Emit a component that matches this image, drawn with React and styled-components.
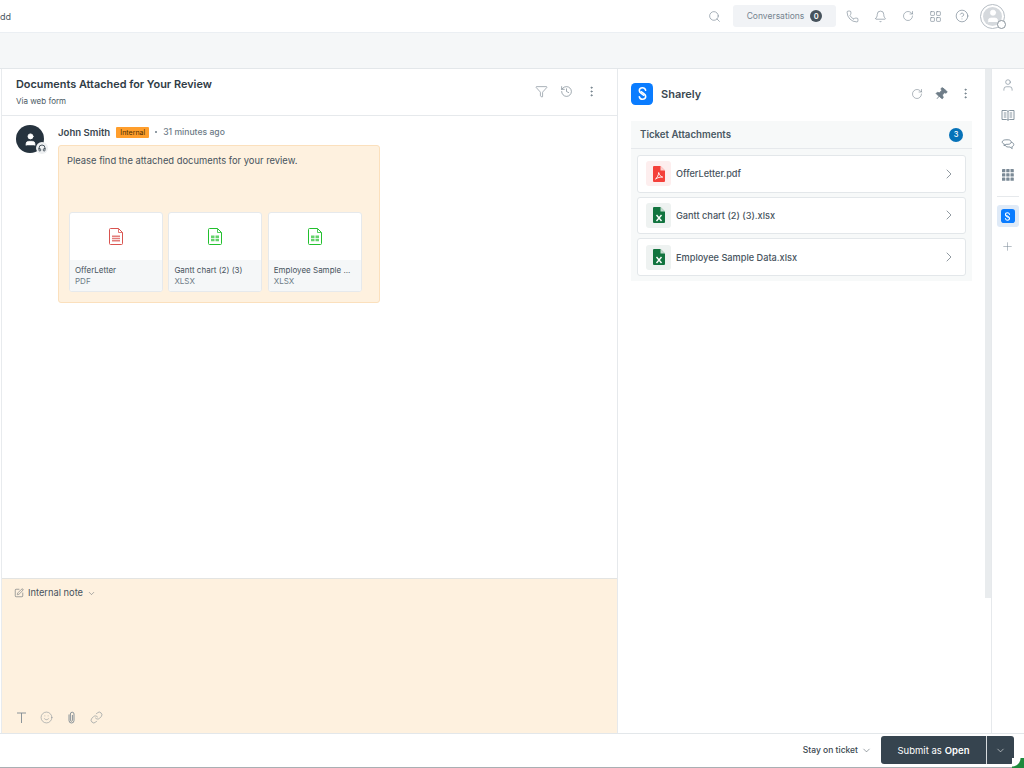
import styled, { createGlobalStyle } from "styled-components";
import { Search, Phone, Bell, RotateCw, LayoutGrid, CircleHelp, Filter, History, EllipsisVertical, Pin, ChevronRight, ChevronDown, SquarePen, Smile, Link, User, Plus, Headphones } from "lucide-react";

const GlobalStyle = createGlobalStyle`
  html, body { margin: 0; padding: 0; height: 100%; background: #fff; overflow: hidden; }
  body { font-family: Inter, "Liberation Sans", sans-serif; color: #3a4750; }
  * { box-sizing: border-box; }
`;

const Page = styled.div`
  width: 1024px;
  height: 768px;
  display: flex;
  flex-direction: column;
  position: relative;
  overflow: hidden;
`;

const TopBar = styled.header`
  height: 33px;
  flex: none;
  display: flex;
  align-items: center;
  justify-content: space-between;
  border-bottom: 1px solid #ebeff3;
  padding-right: 19px;
  font-size: 9px;
  color: #4a5863;
`;

const TopActions = styled.div`
  display: flex;
  align-items: center;
`;

const TopIcon = styled.span`
  display: flex;
  align-items: center;
  justify-content: center;
  width: 16px;
  margin-left: ${props => props.$left || 12}px;
  color: #7b8a96;
`;

const ConvButton = styled.div`
  width: 103px;
  height: 22px;
  margin-left: 11px;
  border-radius: 3px;
  background: #f1f3f6;
  display: flex;
  align-items: center;
  justify-content: center;
  gap: 6px;
  font-size: 8.5px;
  color: #75838f;
`;

const CountDot = styled.span`
  width: 12px;
  height: 12px;
  border-radius: 50%;
  background: #47535d;
  color: #fff;
  font-size: 7.5px;
  font-weight: 600;
  display: flex;
  align-items: center;
  justify-content: center;
`;

const Avatar = styled.div`
  width: 25px;
  height: 25px;
  margin-left: 10px;
  border: 1.5px solid #b6bdc4;
  border-radius: 50%;
  background: #fff;
  padding: 2px;
  position: relative;
`;

const AvatarFill = styled.div`
  width: 100%;
  height: 100%;
  border-radius: 50%;
  background: #d5d9dd;
  color: #fff;
  display: flex;
  align-items: center;
  justify-content: center;
  overflow: hidden;
`;

const StatusDot = styled.span`
  position: absolute;
  right: -2px;
  bottom: -1px;
  width: 9px;
  height: 9px;
  border-radius: 50%;
  background: #fff;
  border: 1.5px solid #8a949c;
`;

const Band = styled.div`
  height: 36px;
  flex: none;
  background: #f5f7f8;
  border-bottom: 1px solid #e3e7ea;
`;

const Main = styled.main`
  flex: 1;
  min-height: 0;
  display: flex;
  padding-left: 1px;
  background: #fff;
`;

const TicketColumn = styled.section`
  width: 617px;
  flex: none;
  display: flex;
  flex-direction: column;
  border-left: 1px solid #e8ebee;
  border-right: 1px solid #e6e9ec;
`;

const TicketHeader = styled.div`
  height: 47px;
  flex: none;
  display: flex;
  justify-content: space-between;
  padding: 8px 19px 0 14px;
  border-bottom: 1px solid #e6e9ec;
`;

const TicketTitle = styled.h1`
  margin: 0;
  font-size: 10.9px;
  line-height: 14px;
  font-weight: 600;
  color: #2f3b45;
`;

const TicketSource = styled.div`
  margin-top: 5px;
  font-size: 8px;
  line-height: 11px;
  color: #4a5863;
`;

const HeaderIcons = styled.div`
  display: flex;
  align-items: center;
  gap: 12px;
  height: 28px;
  color: #6f7d88;
`;

const Thread = styled.div`
  flex: 1;
  min-height: 0;
  display: flex;
  gap: 14px;
  padding: 9px 14px;
`;

const AuthorAvatar = styled.div`
  width: 28px;
  height: 28px;
  flex: none;
  border-radius: 50%;
  background: #26333e;
  color: #fff;
  display: flex;
  align-items: center;
  justify-content: center;
  position: relative;
`;

const AgentBadge = styled.span`
  position: absolute;
  right: -4px;
  bottom: -1px;
  width: 12px;
  height: 12px;
  border-radius: 50%;
  background: #eef0f2;
  color: #26333e;
  display: flex;
  align-items: center;
  justify-content: center;
`;

const MessageMeta = styled.div`
  height: 14px;
  display: flex;
  align-items: center;
  font-size: 9.5px;
  color: #6d7b87;
`;

const AuthorName = styled.span`
  font-size: 9.6px;
  font-weight: 600;
  color: #3a4750;
`;

const InternalTag = styled.span`
  margin-left: 6px;
  width: 33px;
  height: 11px;
  border-radius: 1px;
  background: #ff9e2c;
  color: #4a2d00;
  font-size: 7px;
  line-height: 11px;
  text-align: center;
`;

const MetaDot = styled.span`
  margin: 0 6px;
  width: 2px;
  height: 2px;
  border-radius: 50%;
  background: #6d7b87;
`;

const MetaTime = styled.span`
  font-size: 8.6px;
  font-weight: 500;
`;

const NoteCard = styled.div`
  margin-top: 6px;
  width: 322px;
  height: 158px;
  border: 1px solid #fbe0bd;
  border-radius: 3px;
  background: #fef1df;
  padding: 8px 8px 0 8px;
`;

const NoteText = styled.div`
  font-size: 9.4px;
  line-height: 13px;
  color: #47535d;
`;

const AttachmentRow = styled.div`
  display: flex;
  gap: 5.4px;
  margin: 45px 0 0 2px;
`;

const AttachmentCard = styled.div`
  width: 94px;
  height: 80px;
  border: 1px solid #e6e9ec;
  border-radius: 3px;
  background: #fff;
  overflow: hidden;
  display: flex;
  flex-direction: column;
`;

const AttachmentPreview = styled.div`
  height: 47px;
  flex: none;
  display: flex;
  align-items: center;
  justify-content: center;
`;

const AttachmentInfo = styled.div`
  flex: 1;
  background: #f5f7f8;
  padding: 5px 5px 0;
`;

const AttachmentName = styled.div`
  font-size: 8px;
  line-height: 11px;
  color: #47535d;
  white-space: nowrap;
`;

const AttachmentType = styled.div`
  font-size: 8px;
  line-height: 11px;
  color: #6d7b87;
`;

const Composer = styled.div`
  height: 155px;
  flex: none;
  background: #fef1df;
  border-top: 1px solid #e3e4e2;
  display: flex;
  flex-direction: column;
  justify-content: space-between;
  padding: 8px 12px 9px;
`;

const NoteType = styled.div`
  display: flex;
  align-items: center;
  gap: 4px;
  font-size: 9.3px;
  line-height: 12px;
  color: #47535d;
`;

const ComposerTools = styled.div`
  display: flex;
  align-items: center;
  gap: 12px;
  padding-left: 1px;
  color: #7f8a92;
`;

const AppPanel = styled.aside`
  width: 367px;
  flex: none;
  padding: 13px 13px 0 13px;
`;

const AppHeader = styled.div`
  height: 23px;
  display: flex;
  align-items: center;
`;

const AppLogo = styled.div`
  width: ${props => props.$size}px;
  height: ${props => props.$size}px;
  flex: none;
  border-radius: ${props => props.$size / 5}px;
  background: #0a7cff;
  color: #fff;
  display: flex;
  align-items: center;
  justify-content: center;
`;

const AppName = styled.div`
  margin-left: 8px;
  font-size: 11px;
  font-weight: 600;
  color: #3a4750;
`;

const AppActions = styled.div`
  margin-left: auto;
  display: flex;
  align-items: center;
  gap: 11px;
  color: #6f7d88;
`;

const TiltedPin = styled(Pin)`
  transform: rotate(40deg);
`;

const AttachmentsBox = styled.div`
  margin-top: 16px;
  height: 160px;
  width: 341px;
  background: #f7f9f9;
`;

const BoxHeader = styled.div`
  height: 28px;
  display: flex;
  align-items: center;
  justify-content: space-between;
  padding: 0 9px 0 9px;
  border-bottom: 1px solid #e6e9ec;
  font-size: 9.7px;
  font-weight: 600;
  color: #4a5863;
`;

const BoxCount = styled.span`
  width: 14px;
  height: 14px;
  border-radius: 50%;
  background: #0672b8;
  color: #fff;
  font-size: 7.5px;
  font-weight: 500;
  display: flex;
  align-items: center;
  justify-content: center;
`;

const FileList = styled.div`
  padding: 6px 6px 0;
  display: flex;
  flex-direction: column;
  gap: 4.2px;
`;

const FileRow = styled.div`
  height: 37.5px;
  display: flex;
  align-items: center;
  padding: 0 8px;
  background: #fff;
  border: 1px solid #e3e7ea;
  border-radius: 3px;
  font-size: 9.2px;
  font-weight: 500;
  color: #47535d;
`;

const FileBadge = styled.span`
  width: 25px;
  height: 25px;
  flex: none;
  margin-right: 5px;
  border-radius: 3px;
  background: ${props => props.$bg};
  display: flex;
  align-items: center;
  justify-content: center;
`;

const RowChevron = styled.span`
  margin-left: auto;
  color: #7f8a92;
  display: flex;
`;

const ScrollTrack = styled.div`
  width: 6px;
  flex: none;
  background: #fff;
`;

const ScrollThumb = styled.div`
  height: 529px;
  background: #e9ecee;
`;

const Rail = styled.nav`
  flex: 1;
  border-left: 1px solid #e6e9ec;
  display: flex;
  flex-direction: column;
  align-items: center;
  padding: 5px 1px 0 0;
  color: #7b8a96;
`;

const RailItem = styled.div`
  width: 22px;
  height: 22px;
  margin-bottom: 8px;
  border-radius: 3px;
  background: ${props => (props.$active ? "#dfeaf7" : "transparent")};
  display: flex;
  align-items: center;
  justify-content: center;
`;

const RailDivider = styled.div`
  width: 22px;
  height: 1px;
  margin: 2px 0 8px;
  background: #e6e9ec;
`;

const Footer = styled.footer`
  height: 35px;
  flex: none;
  display: flex;
  align-items: center;
  justify-content: flex-end;
  padding: 0 10px 1px 0;
  border-top: 1px solid #e3e7ea;
  border-bottom: 1px solid #a9afb3;
  font-size: 8.5px;
  font-weight: 500;
  color: #3a4750;
`;

const StayOn = styled.div`
  display: flex;
  align-items: center;
  gap: 3px;
  margin-right: 9px;
`;

const SubmitGroup = styled.div`
  height: 28px;
  display: flex;
  border-radius: 3px;
  overflow: hidden;
  background: #36444f;
  color: #fff;
`;

const SubmitButton = styled.div`
  width: 105px;
  display: flex;
  align-items: center;
  justify-content: center;
  gap: 3px;
  font-size: 9.5px;
  font-weight: 400;
  & b { font-weight: 600; }
`;

const SubmitMenu = styled.div`
  width: 28px;
  display: flex;
  align-items: center;
  justify-content: center;
  border-left: 1px solid #d7dbde;
`;

const CornerMark = styled.div`
  position: absolute;
  right: 0;
  bottom: 0;
  width: 12px;
  height: 10px;
  background: radial-gradient(circle at 0 0, #fff 0, #fff 8px, #1d8a3c 9px);
`;

const SharelyMark = ({ size }) => (
  <svg width={size} height={size} viewBox="0 0 24 24" fill="none" stroke="currentColor" strokeWidth="2.2" strokeLinecap="round">
    <path d="M16.5 7.5C15.8 5 14 3.8 12 3.8 9.3 3.8 7.500 5.600 7.500 8c0 1.700 1 2.800 2.600 3.900l3.800 2.600" />
    <path d="M7.500 16.500c.7 2.500 2.500 3.700 4.500 3.700 2.700 0 4.500-1.800 4.500-4.200 0-1.700-1-2.800-2.600-3.900l-3.800-2.600" />
  </svg>
);

const DocIcon = ({ color, pdf }) => (
  <svg width="16" height="17" viewBox="0 0 16 17" fill="none">
    <path d="M1.5 1.5a1 1 0 0 1 1-1h8l4 4v11a1 1 0 0 1-1 1h-11a1 1 0 0 1-1-1z" stroke={color} />
    <path d="M10.5.5v4h4" stroke={color} strokeWidth=".8" />
    {pdf ? (
      <path d="M4 7.5h8v1.4H4zM4 9.8h8v1.4H4zM4 12.1h8v1.4H4z" fill={color} opacity=".75" />
    ) : (
      <path d="M4 7.5h3.5v2.4H4zM8.5 7.5H12v2.4H8.5zM4 10.8h3.5v2.4H4zM8.5 10.8H12v2.4H8.5z" fill={color} opacity=".7" />
    )}
  </svg>
);

const FileGlyph = ({ color, label }) => (
  <svg width="12" height="16" viewBox="0 0 12 16">
    <path d="M1 0h6.5L12 4.5V15a1 1 0 0 1-1 1H1a1 1 0 0 1-1-1V1a1 1 0 0 1 1-1z" fill={color} />
    <path d="M7.5 0v4.5H12z" fill="#fff" opacity=".75" />
    {label === "pdf" ? (
      <path d="M2.5 13c2-1.500 3-4 3.200-6.500.6 2.500 1.800 4 4 4.600-2.600-.2-5 .5-7.200 1.900z" fill="none" stroke="#fff" strokeWidth=".9" />
    ) : (
      <path d="M3.500 8 8.500 14M8.500 8 3.500 14" stroke="#fff" strokeWidth="1.400" />
    )}
  </svg>
);

const TextIcon = () => (
  <svg width="13" height="13" viewBox="0 0 13 13" fill="none" stroke="currentColor" strokeWidth=".9">
    <path d="M2 2h9M6.500 2v10" />
  </svg>
);

const ClipIcon = () => (
  <svg width="13" height="13" viewBox="0 0 13 13" fill="none" stroke="currentColor" strokeWidth=".9">
    <path d="M4 3.500v6a2.500 2.500 0 0 0 5 0V3a1.800 1.800 0 0 0-3.600 0v6.300a1 1 0 0 0 2 0V4" />
  </svg>
);

const BookIcon = () => (
  <svg width="14" height="14" viewBox="0 0 14 14" fill="none" stroke="currentColor" strokeWidth=".9">
    <path d="M1 2.500h4.500L7 3.300l1.500-.8H13v9H8.500l-1.500.7-1.500-.7H1z" />
    <path d="M7 3.300v8.900M2.800 5h2.600M2.800 7h2.600M2.800 9h2.600M8.600 5h2.600M8.600 7h2.600M8.600 9h2.600" />
  </svg>
);

const ChatIcon = () => (
  <svg width="14" height="14" viewBox="0 0 14 14" fill="none" stroke="currentColor" strokeWidth=".9">
    <path d="M4.800 1.800h2.400c1.800 0 3 1 3 2.200S9 6.300 7.200 6.300H5L3 7.800l.3-1.800C2 5.600 1.200 5 1.200 4c0-1.200 1.600-2.200 3.600-2.200z" />
    <path d="M10.200 4.300c1.500.2 2.600 1.100 2.600 2.300 0 1-.8 1.700-1.900 2.100l.3 2-2.200-1.700H7.200c-1.600 0-2.900-.8-3.100-2" />
  </svg>
);

const GridIcon = () => (
  <svg width="12" height="12" viewBox="0 0 12 12" fill="currentColor">
    {[0, 4.25, 8.5].map(y => [0, 4.25, 8.5].map(x => (
      <rect key={`${x}-${y}`} x={x} y={y} width="3.3" height="3.3" rx=".4" />
    )))}
  </svg>
);

const attachments = [
  { name: "OfferLetter", type: "PDF", color: "#d9534f", pdf: true },
  { name: "Gantt chart (2) (3)", type: "XLSX", color: "#22c02e" },
  { name: "Employee Sample ...", type: "XLSX", color: "#22c02e" },
];

const files = [
  { name: "OfferLetter.pdf", bg: "#fdeeee", color: "#f4403a", label: "pdf" },
  { name: "Gantt chart (2) (3).xlsx", bg: "#eef2f1", color: "#12743f", label: "x" },
  { name: "Employee Sample Data.xlsx", bg: "#eef2f1", color: "#12743f", label: "x" },
];

const App = () => {
  return (
    <Page>
      <GlobalStyle />
      <TopBar>
        <span>dd</span>
        <TopActions>
          <TopIcon><Search size={13} strokeWidth={1.2} /></TopIcon>
          <ConvButton>Conversations <CountDot>0</CountDot></ConvButton>
          <TopIcon $left={8}><Phone size={13} strokeWidth={1.2} /></TopIcon>
          <TopIcon><Bell size={13} strokeWidth={1.2} /></TopIcon>
          <TopIcon><RotateCw size={12} strokeWidth={1.2} /></TopIcon>
          <TopIcon $left={11}><LayoutGrid size={13} strokeWidth={1.2} /></TopIcon>
          <TopIcon $left={11}><CircleHelp size={14} strokeWidth={1.2} /></TopIcon>
          <Avatar>
            <AvatarFill><User size={16} fill="#fff" strokeWidth={1} /></AvatarFill>
            <StatusDot />
          </Avatar>
        </TopActions>
      </TopBar>
      <Band />
      <Main>
        <TicketColumn>
          <TicketHeader>
            <div>
              <TicketTitle>Documents Attached for Your Review</TicketTitle>
              <TicketSource>Via web form</TicketSource>
            </div>
            <HeaderIcons>
              <Filter size={13} strokeWidth={1.1} />
              <History size={13} strokeWidth={1.2} />
              <EllipsisVertical size={13} strokeWidth={1.8} />
            </HeaderIcons>
          </TicketHeader>
          <Thread>
            <AuthorAvatar>
              <User size={15} fill="#fff" strokeWidth={1.4} />
              <AgentBadge><Headphones size={8} strokeWidth={2.4} /></AgentBadge>
            </AuthorAvatar>
            <div>
              <MessageMeta>
                <AuthorName>John Smith</AuthorName>
                <InternalTag>Internal</InternalTag>
                <MetaDot />
                <MetaTime>31 minutes ago</MetaTime>
              </MessageMeta>
              <NoteCard>
                <NoteText>Please find the attached documents for your review.</NoteText>
                <AttachmentRow>
                  {attachments.map(item => (
                    <AttachmentCard key={item.name}>
                      <AttachmentPreview>
                        <DocIcon color={item.color} pdf={item.pdf} />
                      </AttachmentPreview>
                      <AttachmentInfo>
                        <AttachmentName>{item.name}</AttachmentName>
                        <AttachmentType>{item.type}</AttachmentType>
                      </AttachmentInfo>
                    </AttachmentCard>
                  ))}
                </AttachmentRow>
              </NoteCard>
            </div>
          </Thread>
          <Composer>
            <NoteType>
              <SquarePen size={10} strokeWidth={1.2} />
              Internal note
              <ChevronDown size={9} strokeWidth={1.2} />
            </NoteType>
            <ComposerTools>
              <TextIcon />
              <Smile size={13} strokeWidth={1} />
              <ClipIcon />
              <Link size={13} strokeWidth={1.1} />
            </ComposerTools>
          </Composer>
        </TicketColumn>
        <AppPanel>
          <AppHeader>
            <AppLogo $size={22}><SharelyMark size={17} /></AppLogo>
            <AppName>Sharely</AppName>
            <AppActions>
              <RotateCw size={12} strokeWidth={1.1} />
              <TiltedPin size={14} fill="currentColor" strokeWidth={1.4} />
              <EllipsisVertical size={13} strokeWidth={1.8} />
            </AppActions>
          </AppHeader>
          <AttachmentsBox>
            <BoxHeader>
              Ticket Attachments
              <BoxCount>3</BoxCount>
            </BoxHeader>
            <FileList>
              {files.map(file => (
                <FileRow key={file.name}>
                  <FileBadge $bg={file.bg}><FileGlyph color={file.color} label={file.label} /></FileBadge>
                  {file.name}
                  <RowChevron><ChevronRight size={16} strokeWidth={1.3} /></RowChevron>
                </FileRow>
              ))}
            </FileList>
          </AttachmentsBox>
        </AppPanel>
        <ScrollTrack><ScrollThumb /></ScrollTrack>
        <Rail>
          <RailItem><User size={14} strokeWidth={1.1} /></RailItem>
          <RailItem><BookIcon /></RailItem>
          <RailItem><ChatIcon /></RailItem>
          <RailItem><GridIcon /></RailItem>
          <RailDivider />
          <RailItem $active>
            <AppLogo $size={14}><SharelyMark size={11} /></AppLogo>
          </RailItem>
          <RailItem><Plus size={13} strokeWidth={1} /></RailItem>
        </Rail>
      </Main>
      <Footer>
        <StayOn>Stay on ticket <ChevronDown size={11} strokeWidth={1.1} /></StayOn>
        <SubmitGroup>
          <SubmitButton>Submit as <b>Open</b></SubmitButton>
          <SubmitMenu><ChevronDown size={11} strokeWidth={1.2} /></SubmitMenu>
        </SubmitGroup>
      </Footer>
      <CornerMark />
    </Page>
  );
};

export default App;
